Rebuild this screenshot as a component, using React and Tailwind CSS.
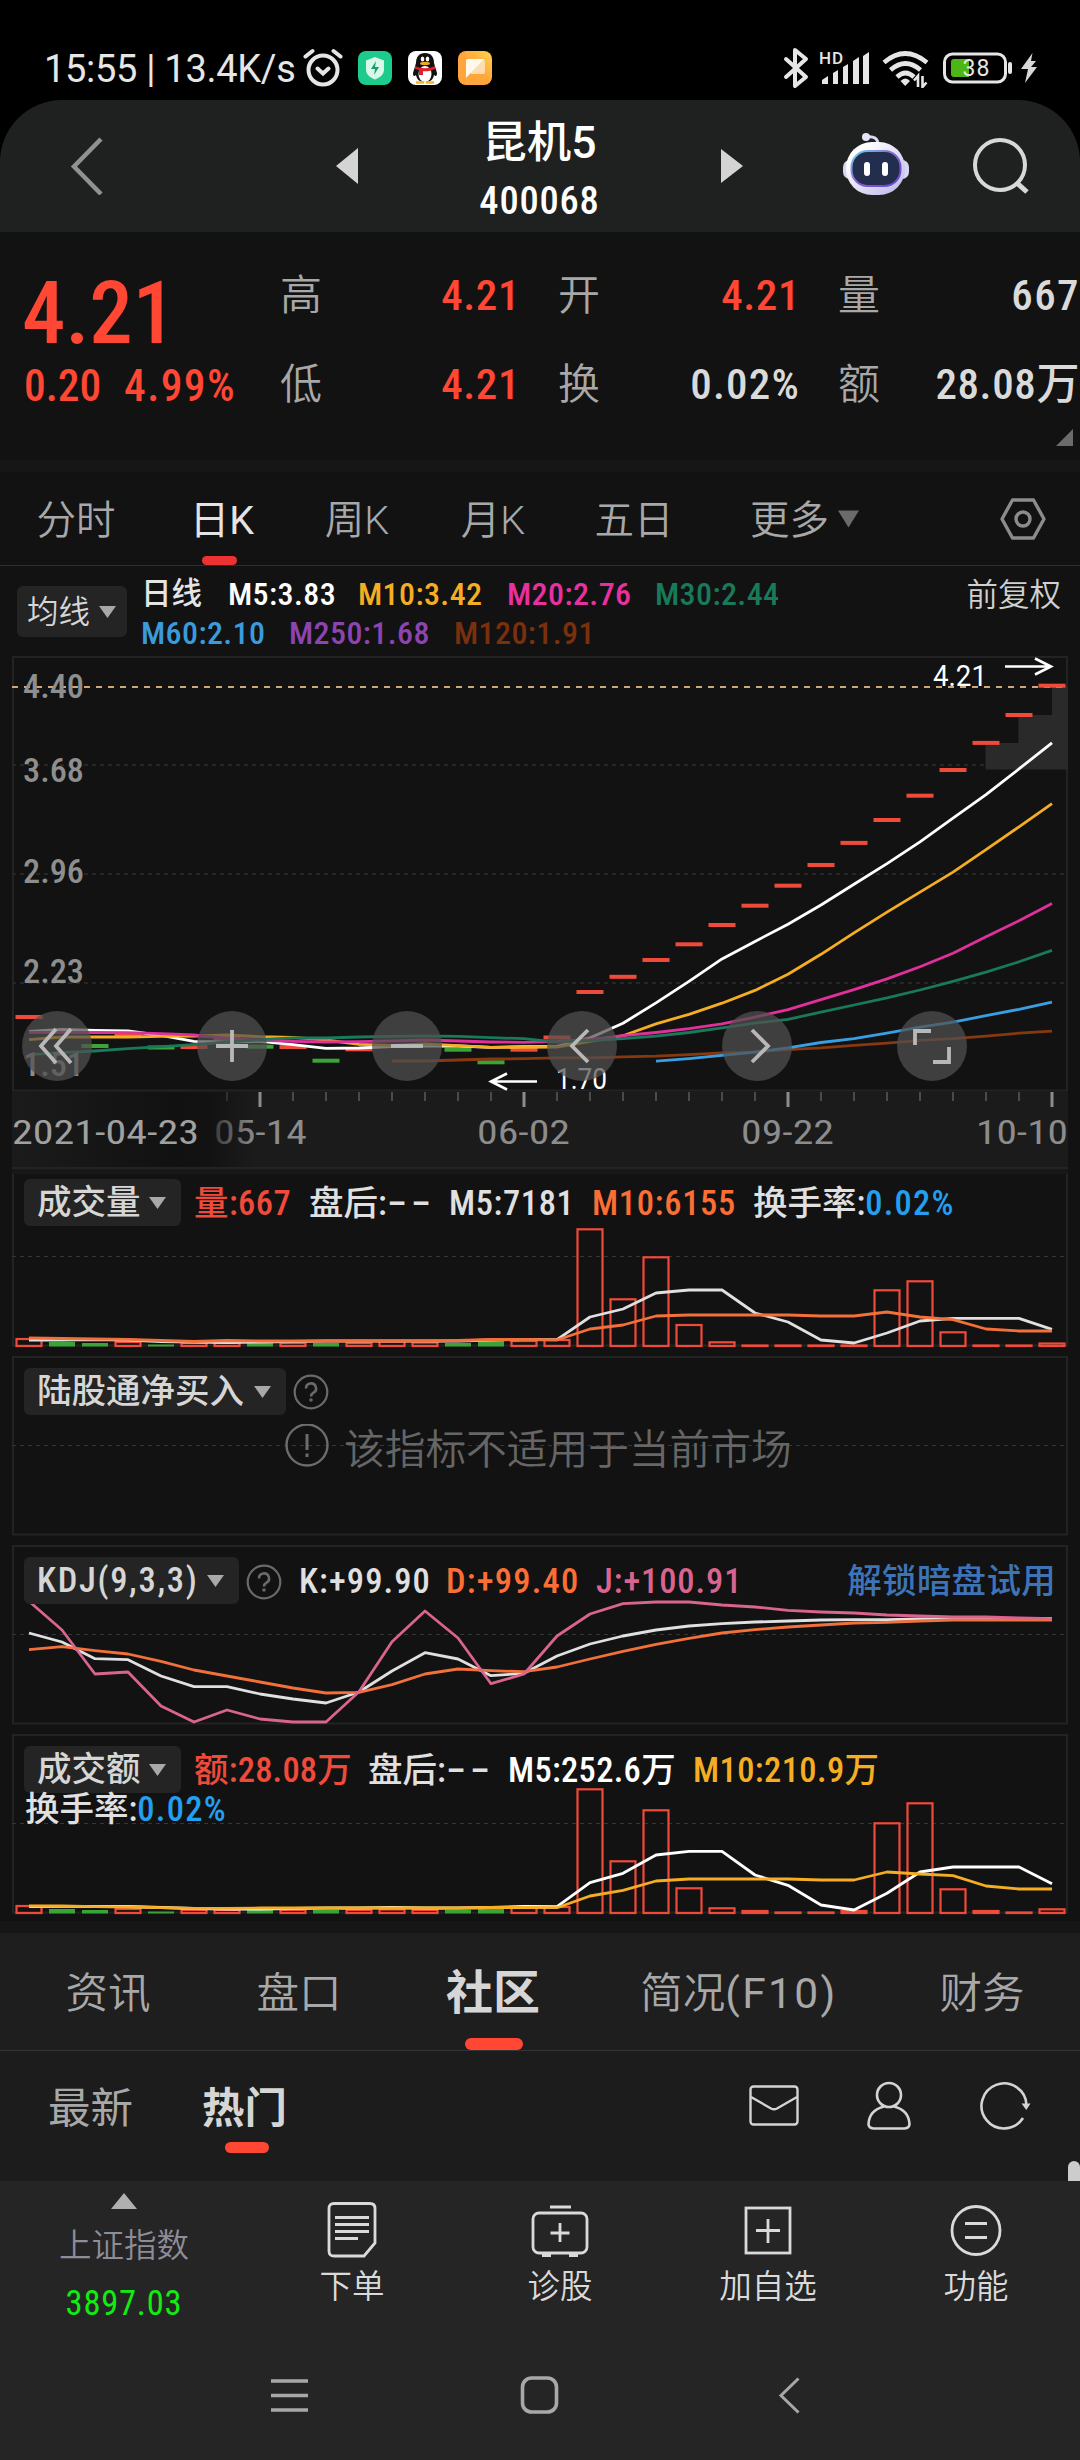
import React from 'react';

// 31 K-lines, 33px apart, first one centered at x=29
const xAt = (i) => 29 + i * 33;
const toPoints = (ys, start = 0) => ys.map((y, i) => `${xAt(i + start)},${y}`).join(' ');

const RED = '#f04a3a';
const GREEN = '#3aa536';

const ma = [
  { color: '#87380f', start: 11, ys: [405, 405, 404, 403, 402.7, 401.9, 401.9, 400.8, 400.1, 398.6, 396.9, 395.8, 393.6, 391.9, 389.4, 387.2, 384.4, 382.6, 380.1, 377.2, 375.1] },
  { color: '#3a9fe2', start: 19, ys: [405.1, 402.6, 399.4, 396.1, 391.9, 386.5, 382.6, 377.2, 371.1, 366.1, 359.7, 353.3, 346.1] },
  { color: '#fff', start: 0, ys: [375.3, 373.3, 374.3, 375, 379.3, 385.3, 386, 385.3, 388.7, 392.3, 392, 390.7, 390, 390, 391.3, 390.7, 390.4, 381.9, 367.2, 346.9, 325.4, 302.9, 285.4, 268.3, 249, 228.3, 207.6, 185.8, 162.2, 138.6, 112.9, 86.9] },
  { color: '#f5ae23', start: 0, ys: [383.7, 381, 381, 381, 380.3, 380, 379, 380.7, 381.3, 384, 388.3, 389.3, 388, 389.7, 391.3, 391.3, 391.1, 385.4, 379.7, 367.9, 358.3, 347.2, 334.4, 318.3, 298.3, 276.9, 256.1, 236.1, 216.1, 193.6, 170.8, 147.6] },
  { color: '#e0309c', start: 0, ys: [376.3, 376.3, 376.5, 376.7, 377.7, 379, 382.3, 384.3, 385.3, 386, 385.7, 384.8, 384, 385, 386, 386.3, 385.4, 383.6, 379.7, 376.5, 372.6, 367.9, 361.1, 353.6, 343.6, 333.6, 322.9, 310.8, 297.2, 280.8, 264.7, 247.6] },
  { color: '#187a5a', start: 0, ys: [398.7, 396.7, 395, 392.7, 390.7, 388.7, 386, 383.7, 382, 382, 381, 380.3, 380, 380.3, 381.7, 382.7, 386.1, 384.7, 382.6, 380.1, 376.5, 371.9, 367.2, 363.3, 356.1, 349, 341.9, 334, 325.4, 316.1, 305.8, 294.4] },
];

// [index, y, color]
const candles = [
  [0, 361, RED], [2, 390, GREEN], [3, 378, RED], [4, 391.5, GREEN], [5, 391, RED], [6, 382, RED], [7, 390.7, GREEN],
  [8, 391, RED], [9, 404.7, GREEN], [10, 393.3, RED], [13, 393.7, GREEN], [14, 406.3, GREEN], [15, 393.7, RED], [16, 381.5, RED],
  [17, 336, RED], [18, 320.8, RED], [19, 304, RED], [20, 288.3, RED], [21, 269, RED], [22, 249.7, RED], [23, 229.7, RED],
  [24, 209, RED], [25, 186.9, RED], [26, 164, RED], [27, 139.7, RED], [28, 114, RED], [29, 86.9, RED], [30, 59, RED], [31, 29.7, RED],
];

const volume = {
  tops: [172, 175, 176, 175, 177.5, 176, 176, 176, 176, 176, 176, 174.5, 175.5, 176, 172, 174, 173, 62.3, 132.3, 90.3, 158, 175.3, 178.5, 178.5, 178.5, 178.5, 123.3, 114.3, 165.3, 178.5, 178.5, 176.5],
  lines: [
    { color: '#e0e0e0', ys: [173, 173, 172.5, 173, 174.5, 175, 175.5, 175, 174.5, 174, 174, 174, 174, 174, 173, 172.5, 172.7, 150, 142, 126, 123, 123, 146, 155, 173, 176, 166, 154, 151.3, 151.3, 151.3, 162.3] },
    { color: '#f2703a', ys: [171, 171.5, 172, 172.3, 173.5, 174.5, 173.5, 174, 174, 174, 174, 174, 174, 173.5, 172.5, 172.5, 173, 162, 158, 149, 148, 148, 148, 148, 149, 149, 145, 150, 152.7, 162, 164, 164] },
  ],
};

const amount = {
  tops: [172, 175, 176, 175, 177.5, 176, 176, 176, 176, 176, 176, 175.5, 176, 176, 172, 174, 173, 55.3, 127.3, 76.3, 154.3, 174.3, 177, 178.5, 178.5, 177, 89.3, 69.3, 155.3, 177, 178.5, 175.3],
  lines: [
    { color: '#fff', ys: [172.5, 172.3, 172.5, 172.5, 173.5, 174.5, 175, 175, 174.5, 174, 174, 173.5, 174, 174, 173.5, 172.5, 172.7, 148.7, 139.3, 121, 117.3, 117.3, 141, 151.3, 171, 176, 159.3, 138, 133, 133, 133, 149.7] },
    { color: '#f5ae23', ys: [172, 172, 172.7, 173, 173.7, 174.3, 174.3, 174, 174, 174, 174, 174, 174, 174, 173.5, 173.5, 173.7, 162, 156.3, 147, 145, 145, 145, 145, 146, 146, 138, 140, 141.7, 152, 155, 155] },
  ],
};

const kdj = [
  { color: '#e0e0e0', ys: [88, 97, 113.7, 114.7, 131, 141.7, 141.7, 149, 154, 158, 147, 126, 107.7, 114, 130.7, 128.3, 111, 99, 91, 85, 81, 78.7, 77, 76, 75, 74.7, 74.7, 74, 73.7, 73.5, 73.5, 73.5] },
  { color: '#f2703a', ys: [104.7, 101.7, 105.7, 109, 116.3, 125, 131, 137, 143, 148, 147.3, 139.7, 129, 124, 125.7, 126.7, 122, 114, 106.3, 99.3, 93.3, 88, 84.7, 82, 80, 78, 77.3, 76, 75, 75, 75, 75] },
  { color: '#d9648f', ys: [56.3, 85, 129, 127, 161, 177, 165, 174, 177, 177, 146.7, 96.7, 66, 93, 138.7, 129, 91, 69, 58.7, 57, 57, 60, 62, 65.3, 67, 68, 70, 71, 72, 72, 73, 73.7] },
];

const greenBars = [1, 2, 4, 7, 9, 13, 14];

const Lines = ({ data }) => data.map((l, i) => (
  <polyline key={i} points={toPoints(l.ys, l.start)} fill="none" stroke={l.color} strokeWidth="2.8" strokeLinejoin="round" />
));

const Bars = ({ tops }) => tops.map((top, i) => {
  if (greenBars.includes(i)) {
    return <rect key={i} x={xAt(i) - 13} y={top} width="26" height={179.5 - top} fill={GREEN} />;
  }
  return (
    <rect key={i} x={xAt(i) - 12.5} y={top} width="25" height={Math.max(179 - top, 0.5)} fill="none" stroke={RED} strokeWidth="2.2" />
  );
});

const Num = ({ children, className = '' }) => (
  <span className={`[font-stretch:87.5%] ${className}`}>{children}</span>
);

const Caret = () => (
  <svg width="17" height="12" viewBox="0 0 17 12"><path d="M0 0H17L8.5 12Z" fill="#a8a8a8" /></svg>
);

// placeholder shown when there is no after-hours value
const Dashes = () => <span className="inline-block origin-left translate-y-[-1px] scale-x-[1.9] tracking-[2px]">--</span>;

const Pill = ({ children, className = '' }) => (
  <div className={`flex h-[47px] shrink-0 items-center justify-between rounded-md bg-[#242424] pl-[13px] pr-[15px] text-[34.5px] text-[#d6d6d6] ${className}`}>
    <span className="pt-[1px]">{children}</span>
    <Caret />
  </div>
);

const Help = () => (
  <svg className="shrink-0" width="36" height="36" viewBox="0 0 36 36" fill="none" stroke="#6a6a6a" strokeWidth="2.2">
    <circle cx="18" cy="18" r="16.3" />
    <path d="M13 14.5a5 5 0 1 1 7.5 4.2c-1.8 1.1-2.5 1.8-2.5 3.8" strokeWidth="2.6" />
    <circle cx="18" cy="26" r="1" strokeWidth="1.6" />
  </svg>
);

const Panel = ({ children, chart, className = '' }) => (
  <section className={`relative h-[179px] ${className}`}>
    <svg className="absolute inset-0" width="1080" height="181" viewBox="0 0 1080 181">
      <path d="M12 1H1068M12 178.5H1068M13 1V179M1067 1V179" stroke="#232323" strokeWidth="2" />
      <path d="M12 89.5H1066" stroke="#363636" strokeWidth="1" strokeDasharray="4 4" />
      {chart}
    </svg>
    <div className="relative pl-[24px] pr-[26px] pt-[12px]">{children}</div>
  </section>
);

const StatusBar = () => (
  <div className="flex h-[100px] items-start justify-between bg-black pl-[44px] pr-[42px] pt-[44px] text-[#e6e6e6]">
    <div className="flex h-[48px] items-center">
      <span className="w-[259px] whitespace-nowrap pt-[2px] text-[38px] tracking-[-0.3px]">15:55 | 13.4K/s</span>
      <svg width="40" height="40" viewBox="0 0 40 40" fill="none" stroke="#e6e6e6" strokeWidth="4" strokeLinecap="round">
        <circle cx="20" cy="22" r="14.5" />
        <path d="M14.5 20.5l5.5 5 5.5-5M2.5 8.5l7-5.5M37.5 8.5l-7-5.5" />
      </svg>
      <svg className="ml-[15px]" width="34" height="34" viewBox="0 0 34 34">
        <rect width="34" height="34" rx="8" fill="#1dcb8d" />
        <path d="M17 6l9 3.5v9c0 5-4 8-9 10-5-2-9-5-9-10v-9Z" fill="#d8f8ea" />
        <path d="M18 10l-5 8h4l-1 6 5-8h-4Z" fill="#1a9b72" />
      </svg>
      <svg className="ml-[16px]" width="34" height="34" viewBox="0 0 34 34">
        <rect width="34" height="34" rx="8" fill="#fff" />
        <path d="M17 2c-6 0-9 4-9 10l-3 10c0 3 1 4 3 2 1 5 4 7 9 7s8-2 9-7c2 2 3 1 3-2l-3-10c0-6-3-10-9-10Z" fill="#111" />
        <ellipse cx="17" cy="23" rx="6.5" ry="8" fill="#fff" />
        <ellipse cx="14.5" cy="8" rx="1.8" ry="2.6" fill="#fff" />
        <ellipse cx="19.5" cy="8" rx="1.8" ry="2.6" fill="#fff" />
        <ellipse cx="17" cy="12.5" rx="5" ry="1.7" fill="#f5a623" />
        <path d="M7 15c6 3 14 3 20 0v3c-4 2-8 2.5-12 2.2V24h-4v-5l-4-1Z" fill="#e0202a" />
        <path d="M8 31.5h8M18 31.5h8" stroke="#f5b623" strokeWidth="2.5" />
      </svg>
      <svg className="ml-[16px]" width="34" height="34" viewBox="0 0 34 34">
        <defs>
          <linearGradient id="note" x1="0" y1="1" x2="1" y2="0">
            <stop offset="0.5" stopColor="#ffa53c" />
            <stop offset="1" stopColor="#ffd24d" />
          </linearGradient>
        </defs>
        <rect width="34" height="34" rx="8" fill="url(#note)" />
        <path d="M8 10q0-2 2-2h15q2 0 2 2v11q0 2-2 2H13Z" fill="#ffdcae" />
        <path d="M8 10q0-2 2-2h16L8 27Z" fill="#fff8ec" />
      </svg>
    </div>
    <div className="flex h-[48px] items-center">
      <svg width="26" height="42" viewBox="0 0 26 42" fill="none" stroke="#e6e6e6" strokeWidth="4" strokeLinejoin="round" strokeLinecap="round">
        <path d="M3 12l20 18-11 9V3l11 9L3 30" />
      </svg>
      <svg className="ml-[10px]" width="52" height="40" viewBox="0 0 52 40" fill="#e6e6e6">
        <text x="0" y="16" fontSize="17" fontWeight="500" textLength="24">HD</text>
        <path d="M3 36v-4l6-4v8ZM14 36V25l5-3v14ZM24 36V19l5-3v20ZM34 36V13l6-4v27ZM44 36V8l6-4v32Z" />
      </svg>
      <svg className="ml-[11px]" width="48" height="40" viewBox="0 0 48 40" fill="none" stroke="#e6e6e6" strokeWidth="4.6">
        <path d="M2 14.5q21-18 43 0M8.5 22q15-13 30 0M15 29q8.5-8 17 0" />
        <path d="M18.5 33q5-5 9.5 0l-4.8 5Z" fill="#e6e6e6" stroke="none" />
        <path d="M36 39V28l-4 4.5M40.5 28v11l4-4.5" strokeWidth="2.6" />
      </svg>
      <svg className="ml-[13px]" width="70" height="34" viewBox="0 0 70 34">
        <rect x="1.5" y="3" width="61" height="28" rx="8" fill="none" stroke="#e6e6e6" strokeWidth="3" />
        <path d="M11 8H26V26H11Q8 26 8 23V11Q8 8 11 8Z" fill="#4db617" />
        <path d="M67 13v8" stroke="#e6e6e6" strokeWidth="4" strokeLinecap="round" />
        <text x="19.5" y="25" fontSize="23" fill="#e6e6e6" textLength="27">38</text>
      </svg>
      <svg className="ml-[7px]" width="18" height="32" viewBox="0 0 18 32"><path d="M12.5 1L1 17h7L5 31 17 15h-6L16 9h-5Z" fill="#d8d8d8" /></svg>
    </div>
  </div>
);

const Header = () => (
  <div className="bg-black">
    <header className="flex h-[132px] items-center rounded-t-[62px] bg-[#1f2120]">
      <svg className="ml-[70px]" width="34" height="58" viewBox="0 0 34 58"><path d="M31 2L4 29.5L31 57" fill="none" stroke="#919191" strokeWidth="4.5" /></svg>
      <svg className="ml-[232px]" width="22" height="36" viewBox="0 0 22 36"><path d="M22 0V36L0 18Z" fill="#d4d4d4" /></svg>
      <div className="flex w-[363px] flex-col items-center pt-[10px] text-white">
        <h1 className="text-[44.5px] font-medium leading-[60px]">昆机5</h1>
        <p className="text-[38.5px] font-medium leading-[56px] tracking-[0.8px]"><Num>400068</Num></p>
      </div>
      <svg width="22" height="34" viewBox="0 0 22 34"><path d="M0 0V34L22 17Z" fill="#d4d4d4" /></svg>
      <svg className="mb-[4px] ml-[99px]" width="68" height="64" viewBox="0 0 68 64">
        <defs>
          <linearGradient id="head" x1="0" y1="0" x2="1" y2="1">
            <stop offset="0.2" stopColor="#fff" />
            <stop offset="1" stopColor="#b9b3e8" />
          </linearGradient>
          <linearGradient id="rim" x1="0" y1="0" x2="1" y2="1">
            <stop offset="0" stopColor="#6fd6ef" />
            <stop offset="0.5" stopColor="#8a5fd0" />
            <stop offset="1" stopColor="#5a46d6" />
          </linearGradient>
        </defs>
        <path d="M24 5q12-2 12 8" fill="none" stroke="#dcdaf2" strokeWidth="3" />
        <circle cx="24" cy="5" r="4" fill="#e6e4f8" />
        <rect x="1" y="28" width="66" height="19" rx="7" fill="#d9d6f4" />
        <rect x="4" y="10" width="59" height="53" rx="26" fill="url(#head)" />
        <rect x="9.5" y="19" width="49" height="35" rx="16" fill="#232d4e" stroke="url(#rim)" strokeWidth="2" />
        <rect x="22" y="30" width="6" height="14" rx="3" fill="#fff" />
        <rect x="40" y="30" width="6" height="14" rx="3" fill="#fff" />
      </svg>
      <svg className="ml-[62px]" width="58" height="58" viewBox="0 0 58 58" fill="none" stroke="#d8d8d8" strokeWidth="4">
        <circle cx="28" cy="28" r="25" />
        <path d="M44 45l11 10" strokeWidth="5" />
      </svg>
    </header>
  </div>
);

const quotes = [
  ['高', '4.21', 'text-[#ff4733] tracking-[0.6px]'],
  ['开', '4.21', 'text-[#ff4733] tracking-[0.6px]'],
  ['量', '667', 'text-[#dadada] tracking-[1.4px]'],
  ['低', '4.21', 'text-[#ff4733] tracking-[0.6px]'],
  ['换', '0.02%', 'text-[#dadada] tracking-[1.2px]'],
  ['额', '28.08万', 'text-[#dadada] tracking-[0.6px]'],
];

const Quote = () => (
  <section className="relative flex h-[228px] pl-[24px]">
    <div className="w-[256px] shrink-0 text-[#ff4733]">
      <p className="ml-[-2px] mt-[36px] text-[87px] font-medium leading-[90px] tracking-[-0.2px]"><Num>4.21</Num></p>
      <p className="mt-[4px] flex text-[43.5px] font-medium leading-[50px]"><Num className="w-[100px]">0.20</Num><Num className="tracking-[1.4px]">4.99%</Num></p>
    </div>
    <div className="mt-[19px] grid w-[800px] grid-cols-[240px_242px_242px] content-start gap-x-[38px]">
      {quotes.map(([label, value, color]) => (
        <div key={label} className="flex h-[89px] items-center justify-between text-[42px]">
          <span className="font-[350] text-[#a8a8a8]">{label}</span>
          <Num className={`${color} text-[43px] font-medium`}>{value}</Num>
        </div>
      ))}
    </div>
    <svg className="absolute bottom-[14px] right-[7px]" width="17" height="17" viewBox="0 0 17 17"><path d="M17 0V17H0Z" fill="#6b6b6b" /></svg>
  </section>
);

const periods = ['分时', '日K', '周K', '月K', '五日'];

const PeriodTabs = () => (
  <nav className="flex h-[94px] justify-between border-b border-[#2e2e2e] pr-[34px] text-[39.5px] font-[350] text-[#a8a8a8]">
    <div className="grid grid-cols-[152px_140px_130px_142px_140px_180px]">
      {periods.map((p) => (
        <div key={p} className={`relative flex items-center justify-center pt-[5px] ${p === '日K' ? 'font-normal text-[#e4e4e4]' : ''}`}>
          {p}
          {p === '日K' && <i className="absolute bottom-0 left-[50px] h-[9px] w-[35px] rounded-full bg-[#ec3232]" />}
        </div>
      ))}
      <div className="flex items-center pl-[46px] pt-[5px]">
        更多
        <svg className="mb-[4px] ml-[9px]" width="21" height="18" viewBox="0 0 22 18"><path d="M0 0H22L11 18Z" fill="#6b6b6b" /></svg>
      </div>
    </div>
    <svg className="mt-[24px]" width="46" height="46" viewBox="0 0 46 46" fill="none" stroke="#8c8c8c" strokeWidth="3.4">
      <path d="M12.5 4H33.5L44 23L33.5 42H12.5L2 23Z" strokeLinejoin="round" />
      <circle cx="23" cy="23" r="7" />
    </svg>
  </nav>
);

const maLegend = [
  ['M5:3.83', 'w-[130px] text-white'],
  ['M10:3.42', 'w-[149px] text-[#f5ae23]'],
  ['M20:2.76', 'w-[148px] text-[#e830a0]'],
  ['M30:2.44', 'w-[140px] text-[#187a5a]'],
];
const maLegend2 = [
  ['M60:2.10', 'w-[148px] text-[#3a9bdc]'],
  ['M250:1.68', 'w-[165px] text-[#8c44b0]'],
  ['M120:1.91', 'w-[160px] text-[#7a300e]'],
];

const MaBar = () => (
  <div className="flex h-[90px] items-start pl-[17px] pr-[19px]">
    <div className="mt-[20px] flex h-[51px] w-[110px] items-center justify-between rounded-md bg-[#242424] pl-[10px] pr-[11px] text-[31.5px] font-[350] text-[#d6d6d6]">
      <span className="pt-[2px]">均线</span><Caret />
    </div>
    <div className="ml-[14px] flex-1 pt-[8px] text-[32px] font-medium tracking-[0.4px]">
      <div className="flex h-[39px] items-center">
        <span className="w-[87px] text-[30.5px] tracking-normal text-[#e4e4e4]">日线</span>
        {maLegend.map(([t, c]) => <Num key={t} className={c}>{t}</Num>)}
      </div>
      <div className="flex h-[39px] items-center">
        {maLegend2.map(([t, c]) => <Num key={t} className={c}>{t}</Num>)}
      </div>
    </div>
    <span className="mt-[6px] text-[31.5px] font-[350] text-[#d0d0d0]">前复权</span>
  </div>
);

const priceLabels = [
  ['4.40', 42], ['3.68', 126], ['2.96', 227], ['2.23', 327], ['1.51', 420],
];

const dates = [
  ['2021-04-23', 12, 187, '#a0a0a0'], ['05-14', 214, 93, 'url(#fade)'], ['06-02', 477, 93, '#8c8c8c'], ['09-22', 741, 93, '#8c8c8c'], ['10-10', 976, 92, '#8c8c8c'],
];

const tools = [
  [57, 'M-1 -17L-16 0L-1 17M14 -17L-1 0L14 17'],
  [232, 'M-16 0H16M0 -16V16'],
  [407, 'M-16 0H16'],
  [582, 'M6 -16L-10 0L6 16'],
  [757, 'M-5 -16L11 0L-5 16'],
  [932, 'M-17 -1V-15H-1M1 16H17V1'],
];

const PriceChart = () => (
  <svg className="block" width="1080" height="511" viewBox="0 0 1080 511">
    <defs>
      <linearGradient id="axis" x1="0" x2="1">
        <stop offset="0" stopColor="#1b1b1b" />
        <stop offset="0.155" stopColor="#111111" />
        <stop offset="0.185" stopColor="#121212" />
        <stop offset="0.23" stopColor="#1b1b1b" />
      </linearGradient>
      <linearGradient id="fade" x1="0" x2="1">
        <stop offset="0" stopColor="#3c3c3c" />
        <stop offset="0.45" stopColor="#8c8c8c" />
      </linearGradient>
    </defs>
    <rect x="12" y="436" width="1056" height="82" fill="url(#axis)" />
    <path d="M12 1H1068M12 434.5H1068M13 1V435M1067 1V435" stroke="#232323" strokeWidth="2" />
    <path d="M12 109H1066M12 218H1066M12 327H1066" stroke="#262626" strokeWidth="2" strokeDasharray="4 4" />
    <path d="M985.5 113.5V87H1018.5V59H1052V30H1068V113.5Z" fill="#2a2a2a" />
    <path d="M12 31H1066" stroke="#cda878" strokeWidth="2" strokeDasharray="6 6" />
    {candles.map(([i, y, color]) => (
      <rect key={i} x={xAt(i) - 13.5} y={y - 2} width="27" height="4" fill={color} />
    ))}
    <Lines data={ma} />
    <g fill="#8e8e8e" fontSize="34" fontWeight="500">
      {priceLabels.map(([t, y]) => (
        <text key={t} x="23" y={y} textLength="61" lengthAdjust="spacingAndGlyphs" className="[font-stretch:87.5%]">{t}</text>
      ))}
    </g>
    <g stroke="#fff" strokeWidth="2.6" fill="none">
      <path d="M1005 10.5H1051M1035 2.5L1051 10.5L1035 18.5" />
      <path d="M537 425.5H491M507 417.5L491 425.5L507 433.5" />
    </g>
    <text x="933" y="30" fontSize="29" fill="#fff" textLength="54" lengthAdjust="spacingAndGlyphs">4.21</text>
    <text x="556" y="432.5" fontSize="29" fill="#fff" textLength="51" lengthAdjust="spacingAndGlyphs">1.70</text>
    {tools.map(([cx, d]) => (
      <g key={cx} transform={`translate(${cx} 390)`}>
        <circle r="35" fill="#505050" fillOpacity="0.72" />
        <path d={d} fill="none" stroke="#b8b8b8" strokeWidth="3.8" />
      </g>
    ))}
    {Array.from({ length: 26 }, (_, k) => k + 6).map((i) => {
      const major = [7, 15, 23, 31].includes(i);
      return <path key={i} d={`M${xAt(i)} 436v${major ? 15 : 9}`} stroke={major ? '#8c8c8c' : '#4a4a4a'} strokeWidth={major ? 3 : 2} opacity={i === 6 ? 0.5 : 1} />;
    })}
    <g fontSize="34">
      {dates.map(([t, x, w, fill]) => (
        <text key={t} x={x} y="488" fill={fill} textLength={w} lengthAdjust="spacingAndGlyphs" className="[font-stretch:87.5%]">{t}</text>
      ))}
    </g>
  </svg>
);

const bottomTabs = ['资讯', '盘口', '社区', '简况(F10)', '财务'];

const BottomTabs = () => (
  <nav className="grid h-[118px] grid-cols-[206px_186px_202px_290px_196px] border-b border-[#343434] bg-[#1e1e1e] text-[42.5px] font-[350] text-[#a8a8a8]">
    {bottomTabs.map((t) => (
      <div key={t} className={`relative flex items-center justify-center pt-[4px] ${t === '社区' ? 'text-[47px] font-bold text-[#d6d6d6]' : ''} ${t === '资讯' ? 'pl-[10px]' : ''}`}>
        {t === '简况(F10)' ? <>简况<span className="font-normal tracking-[2.4px]">(F10)</span></> : t}
        {t === '社区' && <i className="absolute bottom-0 left-[73px] h-[12px] w-[58px] rounded-full bg-[#ff4733]" />}
      </div>
    ))}
  </nav>
);

const SubTabs = () => (
  <div className="relative flex h-[130px] items-center bg-[#1c1c1c] pl-[48px] pr-[48px] text-[42.5px]">
    <span className="pb-[15px] text-[#a8a8a8]">最新</span>
    <span className="relative ml-[69px] pb-[15px] font-bold text-[#d6d6d6]">
      热门
      <i className="absolute bottom-[2px] left-[23px] h-[11px] w-[44px] rounded-full bg-[#ff4733]" />
    </span>
    <div className="mb-[20px] ml-auto flex items-center">
      <svg width="50" height="42" viewBox="0 0 50 42" fill="none" stroke="#d4d4d4" strokeWidth="2.4">
        <rect x="1.5" y="1.5" width="47" height="38" rx="3" />
        <path d="M2 12L22 23.5q3 1.5 6 0L48 12" />
      </svg>
      <svg className="ml-[67px]" width="46" height="50" viewBox="0 0 46 50" fill="none" stroke="#d4d4d4" strokeWidth="2.6">
        <circle cx="23" cy="14" r="12" />
        <path d="M18 25.5C8 28 3 34 2.5 43q0 4 5 4.5h31q5-.5 5-4.5C43 34 38 28 28 25.5" />
      </svg>
      <svg className="ml-[68px]" width="52" height="50" viewBox="0 0 52 50" fill="none" stroke="#d4d4d4" strokeWidth="2.6">
        <path d="M46.5 24A22.5 22.5 0 1 0 43 37" />
        <path d="M41.5 22.5h9L46.3 29Z" fill="#d4d4d4" stroke="none" />
      </svg>
    </div>
    <i className="absolute bottom-0 right-0 h-[20px] w-[12px] rounded-t-full bg-[#ccc]" />
  </div>
);

const actions = [
  ['下单', (
    <>
      <path d="M8 2.5H44Q49 2.5 49 7.5V42L38 55H8Q3 55 3 50V7.5Q3 2.5 8 2.5Z" />
      <path d="M9 16.5H43M9 23.5H43M9 30.5H43M9 37.5H32" strokeWidth="3" />
    </>
  )],
  ['诊股', (
    <>
      <rect x="-1" y="12" width="54" height="40" rx="6" />
      <path d="M16 6H37M26 22V41M16.5 32H35.5" />
      <path d="M8 54H17M35 54H44" strokeWidth="4" />
    </>
  )],
  ['加自选', (
    <>
      <rect x="4" y="7" width="44" height="45" />
      <path d="M26 18V42M14 29.5H38" />
    </>
  )],
  ['功能', (
    <>
      <circle cx="26" cy="29.5" r="24" />
      <path d="M15 22.5H37M15 36.5H37" />
    </>
  )],
];

const ActionBar = () => (
  <div className="flex h-[143px] bg-[#252525] pt-[11px]">
    <div className="flex w-[248px] flex-col items-center">
      <svg className="mt-[1px] shrink-0" width="26" height="16" viewBox="0 0 26 16"><path d="M13 0L26 16H0Z" fill="#b0b0b0" /></svg>
      <span className="mt-[14px] text-[32.5px] font-[350] leading-[46px] text-[#8d8d98]">上证指数</span>
      <Num className="mt-[11px] text-[34.5px] leading-[46px] tracking-[0.8px] text-[#12ec12]">3897.03</Num>
    </div>
    {actions.map(([label, icon]) => (
      <div key={label} className="flex w-[208px] flex-col items-center">
        <svg className="mt-[9px] overflow-visible" width="52" height="58" viewBox="0 0 52 58" fill="none" stroke="#dadada" strokeWidth="2.8">{icon}</svg>
        <span className="mt-[4px] text-[32.5px] font-[350] leading-[48px] text-[#dadada]">{label}</span>
      </div>
    ))}
  </div>
);

const App = () => (
  <div className="h-[2460px] w-[1080px] overflow-hidden bg-[#121212] font-['Roboto','Noto_Sans_CJK_SC',sans-serif]">
    <StatusBar />
    <Header />
    <Quote />
    <div className="h-[12px] bg-[#161616]" />
    <PeriodTabs />
    <MaBar />
    <PriceChart />

    <div className="flex flex-col gap-[10px] text-[34.5px] font-medium text-[#e0e0e0]">
      <Panel chart={<><rect x="12" y="2" width="1056" height="5" fill="#181818" /><Bars tops={volume.tops} /><Lines data={volume.lines} /></>}>
        <div className="flex h-[47px] items-center whitespace-nowrap pt-[2px]">
          <Pill className="mb-[2px] w-[157px]">成交量</Pill>
          <Num className="ml-[13px] w-[115px] tracking-[0.4px] text-[#f04a3a]">量:667</Num>
          <Num className="w-[140px]">盘后:<Dashes /></Num>
          <Num className="w-[143px] tracking-[0.6px]">M5:7181</Num>
          <Num className="w-[161px] tracking-[0.7px] text-[#fb6f35]">M10:6155</Num>
          <Num>换手率:<span className="tracking-[1.2px] text-[#229ff0]">0.02%</span></Num>
        </div>
      </Panel>

      <Panel>
        <div className="flex h-[47px] items-center gap-[7px]">
          <Pill className="w-[262px]">陆股通净买入</Pill>
          <Help />
        </div>
        <div className="ml-[260px] mt-[-2px] flex items-center gap-[14px] text-[40.7px] font-[350] leading-[60px] text-[#666]">
          <svg width="46" height="46" viewBox="0 0 46 46" fill="none" stroke="#6c6c6c" strokeWidth="2.4">
            <circle cx="23" cy="21" r="20.5" />
            <path d="M23 10V26M23 29.5V33" strokeWidth="3" />
          </svg>
          <span className="pt-[7px]">该指标不适用于当前市场</span>
        </div>
      </Panel>

      <Panel chart={<Lines data={kdj} />}>
        <div className="flex h-[47px] items-center whitespace-nowrap pt-[2px]">
          <Pill className="mb-[2px] w-[215px]"><Num className="tracking-[1.7px]">KDJ(9,3,3)</Num></Pill>
          <span className="ml-[7px] w-[53px]"><Help /></span>
          <Num className="w-[147px] tracking-[1.1px]">K:+99.90</Num>
          <Num className="w-[150px] tracking-[1.2px] text-[#fb6f35]">D:+99.40</Num>
          <Num className="tracking-[0.9px] text-[#d9648f]">J:+100.91</Num>
          <span className="ml-auto mr-[-2px] tracking-[0.3px] text-[#3d74b8]">解锁暗盘试用</span>
        </div>
      </Panel>

      <Panel chart={<><Bars tops={amount.tops} /><Lines data={amount.lines} /></>}>
        <div className="flex h-[47px] items-center whitespace-nowrap pt-[2px]">
          <Pill className="mb-[2px] w-[157px]">成交额</Pill>
          <Num className="ml-[13px] w-[174px] tracking-[0.2px] text-[#f04a3a]">额:28.08万</Num>
          <Num className="w-[140px]">盘后:<Dashes /></Num>
          <Num className="w-[185px] tracking-[0.3px] text-white">M5:252.6万</Num>
          <Num className="tracking-[0.4px] text-[#f5ae23]">M10:210.9万</Num>
        </div>
        <p className="ml-[1px] mt-[-8px] leading-[48px]"><Num>换手率:<span className="tracking-[1.3px] text-[#229ff0]">0.02%</span></Num></p>
      </Panel>
    </div>

    <div className="mt-[8px] h-[12px] bg-[#161616]" />
    <BottomTabs />
    <SubTabs />
    <ActionBar />

    <div className="h-[136px] bg-[#252525] pt-[51px]">
      <svg width="1080" height="40" viewBox="0 0 1080 40" fill="none" stroke="#a8a8a8" strokeWidth="3.6">
        <path d="M271 6H308M271 20.5H308M271 35H308" />
        <rect x="522.5" y="3" width="34" height="34" rx="9" />
        <path d="M798.5 3.5L781 20.5L798.5 37.5" strokeWidth="3" />
      </svg>
    </div>
  </div>
);

export default App;
